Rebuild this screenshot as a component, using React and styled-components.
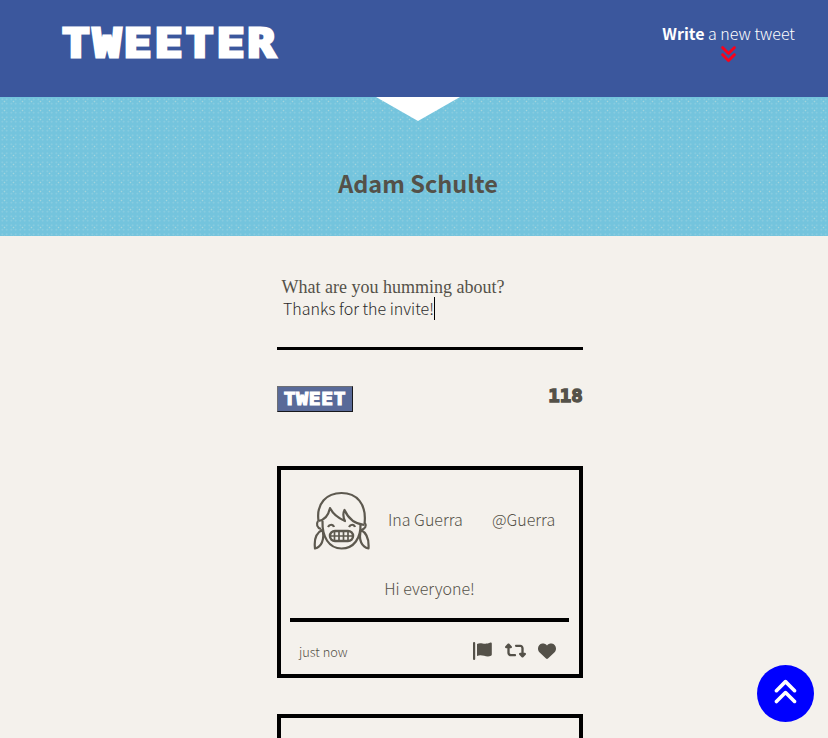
import React from "react";
import styled, { createGlobalStyle } from "styled-components";
import { FaAnglesDown, FaAnglesUp, FaHeart, FaRetweet } from "react-icons/fa6";

const Global = createGlobalStyle`
  * { box-sizing: border-box; }
  html, body { margin: 0; height: 100%; overflow: hidden; }
  body {
    background: #f4f1ec;
    color: #545149;
    font-family: "Noto Sans CJK JP", "Noto Sans", sans-serif;
    font-weight: 300;
    font-size: 16px;
  }
`;
const Page = styled.div`height: 738px; overflow: hidden;`;
const Nav = styled.nav`
  height: 97px;
  padding: 20px 33px 0 62px;
  display: flex;
  justify-content: space-between;
  align-items: flex-start;
  background: #3b579d;
  color: #fff;
`;
const Logo = styled.span`
  margin-top: 1px;
  font: 700 38.5px/46px "DejaVu Sans Mono", monospace;
  letter-spacing: 2.6px;
  transform: scaleX(1.2);
  transform-origin: left;
  -webkit-text-stroke: 3.2px #fff;
`;
const Compose = styled.div`
  display: flex;
  flex-direction: column;
  align-items: center;
  line-height: 26px;
  white-space: nowrap;
  b { font-weight: 700; }
  svg { color: #ff0018; margin-top: -2px; stroke: #ff0018; stroke-width: 14px; }
`;
const Banner = styled.header`
  height: 139px;
  display: flex;
  flex-direction: column;
  align-items: center;
  padding-left: 8px;
  background-color: #74c4dd;
  background-image: radial-gradient(circle, #a5d5dc 0.6px, transparent 1.1px),
    radial-gradient(circle, #90cee0 0.6px, transparent 1.1px);
  background-size: 9px 9px, 4.5px 4.5px;
`;
const Notch = styled.div`
  width: 84px;
  height: 24px;
  background: #fff;
  clip-path: polygon(0 0, 100% 0, 50% 100%);
`;
const Name = styled.h2`
  margin: 42px 0 0;
  font-size: 23.5px;
  line-height: 40px;
  font-weight: 700;
`;
const Main = styled.main`width: 306px; margin: 41px 0 0 277px;`;
const Prompt = styled.label`
  display: block;
  padding-left: 4.5px;
  font: 18px/20px "Liberation Serif", serif;
  white-space: nowrap;
`;
const Field = styled.div`
  height: 53px;
  padding-left: 6px;
  border-bottom: 3px solid #000;
  color: #2b2b2b;
  line-height: 23px;
  display: flex;
  align-items: flex-start;
  white-space: nowrap;
`;
const Caret = styled.i`width: 1px; height: 23px; background: #000;`;
const Controls = styled.div`
  margin-top: 36px;
  height: 80px;
  display: flex;
  justify-content: space-between;
  align-items: flex-start;
`;
const Submit = styled.button`
  width: 76px;
  height: 26px;
  padding: 0;
  border: 1px solid;
  border-color: #6d6f74 #17181c #17181c #6d6f74;
  background: #596a98;
  color: #fff;
`;
const SubmitText = styled.span`
  display: block;
  font: 700 17px/23px "DejaVu Sans Mono", monospace;
  letter-spacing: 0.6px;
  transform: scaleX(1.15);
  -webkit-text-stroke: 1.2px #fff;
`;
const Counter = styled.output`
  font: 700 17px/20px "DejaVu Sans Mono", monospace;
  transform: scaleX(1.12);
  transform-origin: right;
  -webkit-text-stroke: 1.3px #545149;
`;
const Card = styled.article`
  height: 212px;
  margin-bottom: 36px;
  padding: 18px 10px 0 9px;
  border: 4px solid #000;
`;
const CardTop = styled.div`
  height: 64px;
  padding-left: 23px;
  display: flex;
  align-items: center;
  white-space: nowrap;
`;
const Author = styled.span`
  width: ${(p) => (p.$handle ? "auto" : "104px")};
  margin: -3px 0 0 ${(p) => (p.$handle ? "0" : "17px")};
`;
const Message = styled.p`
  height: 70px;
  margin: 0;
  padding-top: 23px;
  line-height: 26px;
  text-align: center;
  border-bottom: 4px solid #000;
`;
const CardFoot = styled.footer`
  padding: 17px 13px 0 9px;
  display: flex;
  justify-content: space-between;
  align-items: center;
  font-size: 12.8px;
  line-height: 26px;
`;
const Actions = styled.div`
  display: flex;
  align-items: center;
  gap: 12.5px;
  margin-top: -3px;
  svg { display: block; }
`;
const ToTop = styled.button`
  position: fixed;
  left: 757px;
  top: 665px;
  width: 57px;
  height: 57px;
  padding: 0 0 3px;
  border: 0;
  border-radius: 50%;
  background: #0000ff;
  color: #fff;
  display: flex;
  align-items: center;
  justify-content: center;
`;

function Avatar() {
  return (
    <svg width="58" height="60" viewBox="0 0 58 60" fill="none" stroke="#5d594f" strokeWidth="2.200" strokeLinejoin="round">
      <path d="M5.500 31C3 13 14 3 28.500 3S54 13 51.500 34" />
      <path d="M5.500 31c6-1 10-6 11.500-13 3 6 8 10 15 13-2-4-2-8-.5-11 4 9 10 14 20 15" />
      <path d="M5 31c-2 3-1 7 3 8M52 33c2 3 0 6-4 7" />
      <path d="M9.500 31C9 47 16 58.500 28.500 58.500S48 48 47.500 34" />
      <path d="M9 40C3 43 1 50 2 58.500 8 57 12 50 9.500 40zM48 40c6 3 8 11 7.500 18.500C49 57 45 50 48 40z" />
      <path d="M15 37c1.500-3 5-3 6 0M36 37c1.500-3 5-3 6 0" />
      <rect x="17" y="41" width="23" height="10" rx="5" strokeWidth="2.500" />
      <path d="M17 46h23M21.500 41v10M26 41v10M30.500 41v10M35 41v10" strokeWidth="1.700" />
    </svg>
  );
}
function Flag() {
  return (
    <svg width="19" height="18" viewBox="0 0 19 18" fill="currentColor">
      <rect width="2.200" height="18" rx="1" />
      <path d="M4 2C8-.5 11 3.500 17.500.500q1.300-.3 1.300 1v11q0 .8-.8 1.200C13 16 9 11.500 4 14z" />
    </svg>
  );
}

export default function App() {
  return (
    <Page>
      <Global />
      <Nav>
        <Logo>TWEETER</Logo>
        <Compose>
          <span><b>Write</b> a new tweet</span>
          <FaAnglesDown size={19} />
        </Compose>
      </Nav>
      <Banner>
        <Notch />
        <Name>Adam Schulte</Name>
      </Banner>
      <Main>
        <Prompt>What are you humming about?</Prompt>
        <Field>Thanks for the invite!<Caret /></Field>
        <Controls>
          <Submit><SubmitText>TWEET</SubmitText></Submit>
          <Counter>118</Counter>
        </Controls>
        <Card>
          <CardTop>
            <Avatar />
            <Author>Ina Guerra</Author>
            <Author $handle>@Guerra</Author>
          </CardTop>
          <Message>Hi everyone!</Message>
          <CardFoot>
            <time>just now</time>
            <Actions>
              <Flag />
              <FaRetweet size={21} />
              <FaHeart size={18} />
            </Actions>
          </CardFoot>
        </Card>
        <Card />
      </Main>
      <ToTop aria-label="Back to top"><FaAnglesUp size={29} /></ToTop>
    </Page>
  );
}
